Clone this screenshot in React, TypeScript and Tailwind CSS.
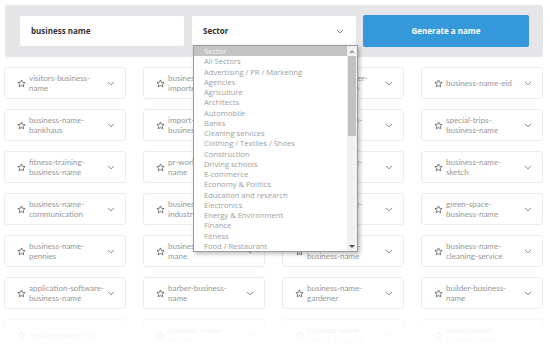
import React from "react";

const names: string[][] = [
  ["visitors-business-name", "business-name-importers", "business-courier-business-name", "business-name-eid"],
  ["business-name-bankhaus", "import-export-business-name", "business-name-jewellery", "special-trips-business-name"],
  ["fitness-training-business-name", "pr-world-business-name", "business-name-restaurant", "business-name-sketch"],
  ["business-name-communication", "business-name-industry", "business-name-hairdresser", "green-space-business-name"],
  ["business-name-pennies", "business-name-\nmane", "entertainment-business-name", "business-name-cleaning-service"],
  ["application-software-business-name", "barber-business-name", "business-name-gardener", "builder-business-name"],
  ["business-name-site", "business-name-\nnature", "business-name-import-of-goods", "development-business-name"],
];

const sectors = [
  "Sector",
  "All Sectors",
  "Advertising / PR / Marketing",
  "Agencies",
  "Agriculture",
  "Architects",
  "Automobile",
  "Banks",
  "Cleaning services",
  "Clothing / Textiles / Shoes",
  "Construction",
  "Driving schools",
  "E-commerce",
  "Economy & Politics",
  "Education and research",
  "Electronics",
  "Energy & Environment",
  "Finance",
  "Fitness",
  "Food / Restaurant",
];

function Star() {
  return (
    <svg width="9" height="9" viewBox="0 0 24 24" fill="none" stroke="#5f5f5f" strokeWidth="2.2" strokeLinejoin="round" className="shrink-0">
      <path d="M12 2.5l2.9 6.2 6.7.8-5 4.6 1.3 6.7L12 17.5l-5.9 3.3 1.3-6.7-5-4.6 6.7-.8z" />
    </svg>
  );
}

function Chevron({ color = "#8a8a8a", w = 8 }: { color?: string; w?: number }) {
  return (
    <svg width={w} height={w * 0.6} viewBox="0 0 9 5.4" fill="none" stroke={color} strokeWidth="1.1" className="shrink-0">
      <path d="M1 1l3.5 3.3L8 1" />
    </svg>
  );
}

function Card({ name }: { name: string }) {
  return (
    <div className="h-[32px] rounded-[3px] border border-[#ececec] bg-white flex items-center pl-[12px] pr-[10px]">
      <Star />
      <div className="ml-[3px] flex-1 min-w-0 pr-[2px] whitespace-pre-line text-[8px] leading-[10px] text-[#979797]" style={{ fontFamily: "Lato, 'Open Sans', sans-serif" }}>
        {name}
      </div>
      <Chevron />
    </div>
  );
}

export default function App() {
  return (
    <div className="relative w-[550px] h-[359px] bg-white overflow-hidden" style={{ fontFamily: "'Open Sans', sans-serif" }}>
      <div className="mx-[5px] mt-[5px] w-[538px] h-[52px] rounded-[3px] bg-[#e6e6e9] flex items-center pl-[15px] gap-[8px]">
        <div className="w-[164px] h-[30px] bg-white rounded-[2px] flex items-center pl-[11px] text-[8px] font-bold text-[#333]">
          business name
        </div>
        <div className="relative w-[164px] h-[30px]">
          <div className="w-full h-full bg-white rounded-[2px] flex items-center pl-[11px] pr-[12px] text-[8px] font-bold text-[#333]">
            Sector
            <div className="ml-auto">
              <Chevron color="#777" />
            </div>
          </div>
          <div className="absolute left-[1px] top-[29px] w-[165px] h-[207px] bg-white border border-[#9a9a9a] shadow-[2px_2px_4px_rgba(0,0,0,0.25)] flex z-20">
            <div className="flex-1 flex flex-col">
              {sectors.map((s, i) => (
                <div
                  key={s}
                  className={
                    "h-[10.25px] leading-[10.25px] pl-[10px] text-[7.6px] whitespace-nowrap " +
                    (i === 0 ? "bg-[#c3c3c3] text-[#f4f4f4]" : "text-[#a0a0a0]")
                  }
                >
                  {s}
                </div>
              ))}
            </div>
            <div className="w-[10px] bg-[#f1f1f1] flex flex-col items-center">
              <div className="h-[10px] flex items-center justify-center">
                <div className="w-0 h-0 border-l-[3px] border-r-[3px] border-b-[3px] border-l-transparent border-r-transparent border-b-[#a3a3a3]" />
              </div>
              <div className="w-[8px] h-[80px] bg-[#c1c1c1]" />
              <div className="mt-auto h-[10px] flex items-center justify-center">
                <div className="w-0 h-0 border-l-[3px] border-r-[3px] border-t-[3px] border-l-transparent border-r-transparent border-t-[#505050]" />
              </div>
            </div>
          </div>
        </div>
        <div className="ml-[-1px] w-[166px] h-[32px] bg-[#3498db] rounded-[2px] flex items-center justify-center text-[8px] font-bold text-white">
          Generate a name
        </div>
      </div>

      <div className="relative mt-[10px] ml-[4px] w-[539px] h-[282px] overflow-hidden">
        <div className="grid grid-cols-4 gap-x-[17px] gap-y-[10px]">
          {names.flat().map((n, i) => (
            <Card key={i} name={n} />
          ))}
        </div>
        <div className="absolute left-0 right-0 bottom-0 h-[45px] bg-gradient-to-b from-white/0 via-white/85 to-white" />
      </div>
    </div>
  );
}
